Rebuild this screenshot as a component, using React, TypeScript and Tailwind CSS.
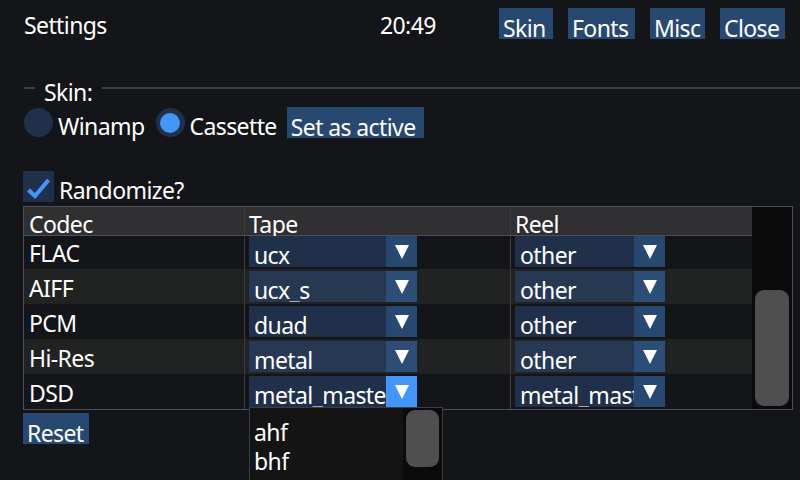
const ROWS = [
  { codec: 'FLAC', tape: 'ucx', reel: 'other' },
  { codec: 'AIFF', tape: 'ucx_s', reel: 'other' },
  { codec: 'PCM', tape: 'duad', reel: 'other' },
  { codec: 'Hi-Res', tape: 'metal', reel: 'other' },
  { codec: 'DSD', tape: 'metal_master', reel: 'metal_master' },
]

function Arrow() {
  return (
    <svg width="16" height="14" viewBox="0 0 16 14">
      <polygon points="1,0 15,0 8,14" fill="#ffffff" />
    </svg>
  )
}

function Combo({
  value,
  width,
  alt,
  active,
}: {
  value: string
  width: string
  alt: boolean
  active?: boolean
}) {
  return (
    <div className={`flex h-[31px] ${width} ${alt ? 'bg-[#263852]' : 'bg-[#20304b]'}`}>
      <div className="flex-1 overflow-hidden whitespace-nowrap pl-[5px] pt-[8px]">{value}</div>
      <div
        className={`flex w-[31px] shrink-0 justify-center pt-[9px] ${
          active ? 'bg-[#4296fa]' : alt ? 'bg-[#2c4d75]' : 'bg-[#274870]'
        }`}
      >
        <Arrow />
      </div>
    </div>
  )
}

function Button({ label, className = '' }: { label: string; className?: string }) {
  return (
    <div
      className={`h-[31px] shrink-0 overflow-hidden whitespace-nowrap bg-[#274870] px-[4px] pt-[9px] ${className}`}
    >
      {label}
    </div>
  )
}

export default function App() {
  return (
    <div className="relative h-[480px] w-[800px] overflow-hidden bg-[#141518] pl-[23px] font-['Noto_Sans',sans-serif] text-[23px] leading-none tracking-[-0.6px] text-white">
      {/* Title bar */}
      <div className="mt-[8px] flex h-[31px] items-start">
        <div className="w-[357px] pl-[1px] pt-[6px]">Settings</div>
        <div className="w-[119px] pt-[6px]">20:49</div>
        <div className="flex gap-[15px]">
          <Button label="Skin" className="w-[54px]" />
          <Button label="Fonts" className="w-[67px]" />
          <Button label="Misc" className="w-[55px]" />
          <Button label="Close" className="w-[65px]" />
        </div>
      </div>

      {/* Skin separator */}
      <div className="mt-[42px] flex h-[23px] items-start pl-[1px]">
        <div className="mt-[6px] h-[2px] w-[11px] bg-[#3c3c44]" />
        <div className="ml-[9px]">Skin:</div>
        <div className="ml-[10px] mt-[6px] h-[2px] flex-1 bg-[#3c3c44]" />
      </div>

      {/* Radio row */}
      <div className="mt-[3px] flex h-[31px] items-start pl-[1px]">
        <div className="mt-[1px] h-[29px] w-[29px] rounded-full bg-[#20304b]" />
        <div className="ml-[5px] pt-[8px]">Winamp</div>
        <div className="ml-[11px] mt-[1px] flex h-[29px] w-[29px] items-center justify-center rounded-full bg-[#20304b]">
          <div className="h-[20px] w-[20px] rounded-full bg-[#4296fa]" />
        </div>
        <div className="ml-[5px] pt-[8px]">Cassette</div>
        <Button label="Set as active" className="ml-[10px] w-[137px]" />
      </div>

      {/* Checkbox */}
      <div className="mt-[33px] flex h-[31px] items-start">
        <div className="flex h-[31px] w-[31px] items-center justify-center bg-[#20304b]">
          <svg width="31" height="31" viewBox="0 0 31 31">
            <polyline
              points="5.5,19 12,25 25.5,9"
              fill="none"
              stroke="#4296fa"
              strokeWidth="4.2"
            />
          </svg>
        </div>
        <div className="ml-[5px] pt-[8px]">Randomize?</div>
      </div>

      {/* Table */}
      <div className="mt-[4px] flex h-[204px] w-[770px] border border-[#4f4f59]">
        <div className="w-[728px]">
          <div className="flex h-[28px] bg-[#303033]">
            <div className="w-[221px] border-r border-[#3b3b40] pl-[5px] pt-[6px]">Codec</div>
            <div className="w-[266px] border-r border-[#3b3b40] pl-[4px] pt-[6px]">Tape</div>
            <div className="flex-1 pl-[4px] pt-[6px]">Reel</div>
          </div>
          <div className="h-[1px] bg-[#4f4f59]" />
          {ROWS.map((row, i) => {
            const alt = i % 2 === 1
            const first = i === 0
            return (
              <div
                key={row.codec}
                className={`flex ${first ? 'h-[33px]' : 'h-[35px]'} ${alt ? 'bg-[#212322]' : ''}`}
              >
                <div
                  className={`w-[221px] border-r border-[#3b3b40] pl-[5px] ${
                    first ? 'pt-[6px]' : 'pt-[8px]'
                  }`}
                >
                  {row.codec}
                </div>
                <div
                  className={`w-[266px] border-r border-[#3b3b40] pl-[4px] ${
                    first ? 'pt-0' : 'pt-[2px]'
                  }`}
                >
                  <Combo value={row.tape} width="w-[168px]" alt={alt} active={row.codec === 'DSD'} />
                </div>
                <div className={`flex-1 pl-[4px] ${first ? 'pt-0' : 'pt-[2px]'}`}>
                  <Combo value={row.reel} width="w-[150px]" alt={alt} />
                </div>
              </div>
            )
          })}
        </div>
        {/* Scrollbar */}
        <div className="flex w-[40px] flex-col bg-[#0b0b0b] px-[3px] pt-[83px]">
          <div className="h-[116px] rounded-[9px] bg-[#4f4f4f]" />
        </div>
      </div>

      {/* Reset */}
      <div className="mt-[3px] flex">
        <Button label="Reset" className="w-[66px]" />
      </div>

      {/* Combo popup */}
      <div className="absolute left-[249px] top-[407px] flex h-[80px] w-[194px] border border-[#3c3c44] bg-[#141414]">
        <div className="flex-1 pl-[4px] pt-[13px]">
          <div className="h-[29px]">ahf</div>
          <div className="h-[29px]">bhf</div>
        </div>
        <div className="w-[39px] bg-[#0b0b0b] px-[3px] pt-[2px]">
          <div className="h-[57px] rounded-[9px] bg-[#4f4f4f]" />
        </div>
      </div>
    </div>
  )
}
